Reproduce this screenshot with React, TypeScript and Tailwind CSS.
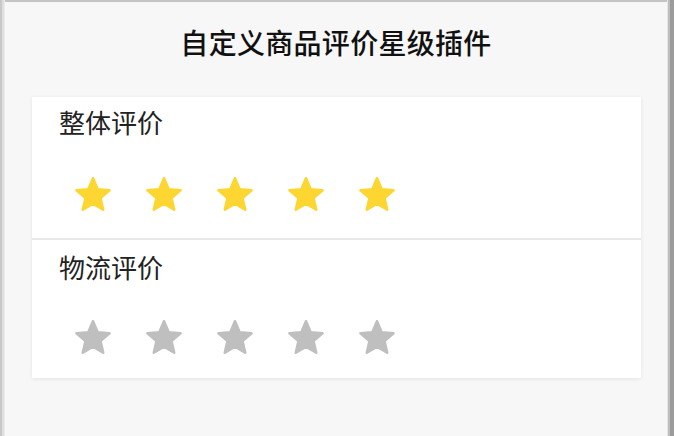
import React from 'react';

const YELLOW = '#FDD632';
const GRAY = '#BFBFBF';

const Star = ({ color }: { color: string }) => (
  <svg width="36" height="34" viewBox="1.2 1.2 21.6 20.6">
    <path
      d="M12 17.27L18.18 21l-1.64-7.03L22 9.24l-7.19-.61L12 2 9.19 8.63 2 9.24l5.46 4.73L5.82 21z"
      fill={color}
      stroke={color}
      strokeWidth="1.6"
      strokeLinejoin="round"
    />
  </svg>
);

const RatingRow = ({
  label,
  score,
  className,
  starsClass,
}: {
  label: string;
  score: number;
  className: string;
  starsClass: string;
}) => (
  <div className={className}>
    <div className="pl-[27px] text-[26px] leading-[30px] text-[#222]">{label}</div>
    <div className={`flex pl-[43px] gap-[35px] ${starsClass}`}>
      {[1, 2, 3, 4, 5].map((i) => (
        <Star key={i} color={i <= score ? YELLOW : GRAY} />
      ))}
    </div>
  </div>
);

const App: React.FC = () => {
  return (
    <div
      className="w-[674px] h-[436px] bg-[#f7f7f7] flex overflow-hidden"
      style={{ fontFamily: '"Noto Sans CJK SC", "Noto Sans", sans-serif' }}
    >
      {/* left window edge */}
      <div className="w-[5px] h-full flex">
        <div className="w-[2px] bg-[#c8c8c8]" />
        <div className="w-[2px] bg-[#dedede]" />
        <div className="w-[1px] bg-[#ececec]" />
      </div>

      <div className="flex-1 flex flex-col border-t-2 border-[#c4c4c4]">
        <h1 className="pt-[24px] text-center text-[28px] leading-[32px] font-medium text-[#111] tracking-[0.3px]">
          自定义商品评价星级插件
        </h1>

        <div className="mt-[39px] ml-[27px] mr-[26px] bg-white shadow-[0_1px_4px_rgba(0,0,0,0.08)]">
          <RatingRow label="整体评价" score={5} className="pt-[10px] pb-[27px]" starsClass="mt-[40px]" />
          <div className="h-[2px] bg-[#e8e8e8]" />
          <RatingRow label="物流评价" score={0} className="pt-[12px] pb-[24px]" starsClass="mt-[38px]" />
        </div>
      </div>

      {/* right window edge */}
      <div className="w-[7px] h-full flex">
        <div className="w-[1px] bg-[#e6e6e6]" />
        <div className="w-[2px] bg-[#bdbdbd]" />
        <div className="w-[4px] bg-[#9c9c9c]" />
      </div>
    </div>
  );
};

export default App;
